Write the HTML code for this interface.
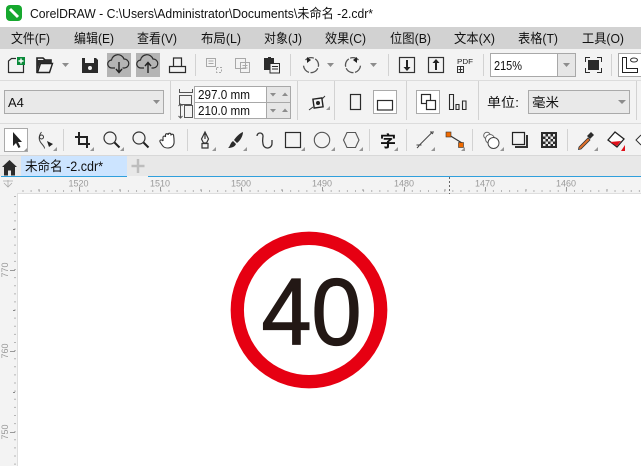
<!DOCTYPE html>
<html><head><meta charset="utf-8">
<style>
html,body{margin:0;padding:0;background:#fff;width:641px;height:466px;overflow:hidden}
svg{display:block;position:absolute;left:0;top:0}
text{font-family:"Liberation Sans","Noto Sans CJK SC",sans-serif;fill:#111}
.m text{font-size:13px}
.r text{font-size:9px;fill:#9a9a9a}
.sep{stroke:#d2d2d2;stroke-width:1}
.ic{fill:none;stroke:#2b2b2b;stroke-width:1.2}
.g{fill:none;stroke:#a8a8a8;stroke-width:1}
.t{fill:#969696}
</style></head><body>
<svg width="641" height="466" viewBox="0 0 641 466" xmlns="http://www.w3.org/2000/svg">
<!-- backgrounds -->
<rect width="641" height="27" fill="#fff"/>
<rect y="27" width="641" height="22" fill="#d2d2d2"/>
<rect y="49" width="641" height="107" fill="#f3f3f3"/>
<rect y="80" width="641" height="1" fill="#dcdcdc"/>
<rect y="123" width="641" height="1" fill="#dcdcdc"/>
<rect y="155" width="641" height="1" fill="#d8d8d8"/>
<rect y="156" width="641" height="20" fill="#e8e8e8"/>
<rect y="176" width="641" height="18" fill="#f3f3f3"/>
<rect x="0" y="194" width="18" height="272" fill="#f3f3f3"/>
<rect x="1" y="176" width="640" height="1" fill="#2f9fdc"/>
<rect x="127" y="176" width="21" height="1" fill="#f3f3f3"/>
<rect x="18" y="193" width="623" height="1" fill="#dedede"/>
<rect x="17" y="193" width="1" height="273" fill="#dedede"/>

<!-- app icon and title -->
<rect x="6" y="5" width="16" height="16" rx="4" fill="#16a82e"/>
<path d="M10 9l8 8" stroke="#fff" stroke-width="3"/>
<text x="30" y="18" font-size="13" textLength="343" lengthAdjust="spacingAndGlyphs">CorelDRAW - C:\Users\Administrator\Documents\未命名 -2.cdr*</text>

<!-- menu -->
<g class="m">
<text x="11" y="43" textLength="39" lengthAdjust="spacingAndGlyphs">文件(F)</text>
<text x="74" y="43" textLength="40" lengthAdjust="spacingAndGlyphs">编辑(E)</text>
<text x="137" y="43" textLength="40" lengthAdjust="spacingAndGlyphs">查看(V)</text>
<text x="201" y="43" textLength="40" lengthAdjust="spacingAndGlyphs">布局(L)</text>
<text x="264" y="43" textLength="38" lengthAdjust="spacingAndGlyphs">对象(J)</text>
<text x="325" y="43" textLength="41" lengthAdjust="spacingAndGlyphs">效果(C)</text>
<text x="390" y="43" textLength="41" lengthAdjust="spacingAndGlyphs">位图(B)</text>
<text x="454" y="43" textLength="41" lengthAdjust="spacingAndGlyphs">文本(X)</text>
<text x="518" y="43" textLength="40" lengthAdjust="spacingAndGlyphs">表格(T)</text>
<text x="582" y="43" textLength="42" lengthAdjust="spacingAndGlyphs">工具(O)</text>
</g>

<!-- standard toolbar -->
<path class="ic" d="M8.500 73V61l3-2.500H16M8.500 72.500H23.500V65"/>
<rect x="17" y="57" width="8" height="8" fill="#0a8a3a"/><path d="M21 58.500v5M18.500 61h5" stroke="#fff" stroke-width="1.400"/>
<path d="M37 73V58h6l2 2h6v3" fill="none" stroke="#222" stroke-width="1.600"/>
<path d="M37.500 72.500l3-9h12l-3 9z" fill="#f3f3f3" stroke="#222" stroke-width="1.400"/>
<path d="M37 60h14v3H40l-3 8z" fill="#2b2b2b"/>
<path d="M62 63h7l-3.500 4z" fill="#8c8c8c"/>
<path d="M82 58h14l2 2v13H82z" fill="#2b2b2b"/><rect x="85" y="58" width="9" height="5" fill="#f3f3f3"/><circle cx="90" cy="68" r="2" fill="#f3f3f3"/>
<rect x="107" y="53" width="24" height="24" fill="#b4b4b4"/>
<rect x="136" y="53" width="24" height="24" fill="#b4b4b4"/>
<path class="ic" d="M115 68h-3a4 4 0 0 1 -.5-8a6.500 6.500 0 0 1 12.500-1a4.500 4.500 0 0 1 .5 9h-2"/>
<path d="M119 62v10M116 69l3 3.500 3-3.500" fill="none" stroke="#222" stroke-width="1.400"/>
<path class="ic" d="M144 68h-3a4 4 0 0 1 -.5-8a6.500 6.500 0 0 1 12.500-1a4.500 4.500 0 0 1 .5 9h-2"/>
<path d="M148 63v10M145 66l3-3.500 3 3.500" fill="none" stroke="#222" stroke-width="1.400"/>
<path class="ic" d="M173.500 66V58h8v8M169.500 66.500h16v6h-16z"/>
<line class="sep" x1="195.500" y1="54" x2="195.500" y2="76"/>
<path class="g" d="M206.500 58.500h9v8h-9zM208.500 61h5M208.500 63.500h5"/>
<path class="g" stroke-dasharray="2 1.500" d="M216.500 67.500h5v5h-5z"/>
<path class="g" d="M235.500 58.500h10v10h-10zM240.500 62.500h9v10h-9zM242.500 65.500h5M242.500 68h5"/>
<path d="M264 58h4v-1h3v1h3v12h-10z" fill="#2b2b2b"/><rect x="270" y="63.500" width="9.500" height="9.500" fill="#f3f3f3" stroke="#2b2b2b"/><path d="M272 66.500h6M272 69h6" stroke="#2b2b2b"/>
<line class="sep" x1="290.500" y1="54" x2="290.500" y2="76"/>
<path d="M305.500 60a7.500 7.500 0 1 1 -2 5" fill="none" stroke="#555" stroke-width="1.300" stroke-dasharray="9 1.500"/>
<path d="M307 57v6l4-3z" fill="#222"/>
<path d="M327 63h7l-3.500 4z" fill="#8c8c8c"/>
<path d="M358.500 60a7.500 7.500 0 1 0 2 5" fill="none" stroke="#555" stroke-width="1.300" stroke-dasharray="9 1.500"/>
<path d="M357 57v6l-4-3z" fill="#222"/>
<path d="M370 63h7l-3.500 4z" fill="#8c8c8c"/>
<line class="sep" x1="388.500" y1="54" x2="388.500" y2="76"/>
<rect x="399.500" y="57.500" width="15" height="15" fill="none" stroke="#333" stroke-width="1.200"/>
<path d="M406 60h2v7h2.500L407 71l-3.500-4H406z" fill="#222"/>
<rect x="428.500" y="57.500" width="15" height="15" fill="none" stroke="#333" stroke-width="1.200"/>
<path d="M435 70h2v-7h2.500L436 59l-3.500 4H435z" fill="#222"/>
<text x="457" y="64" font-size="7.500" textLength="16" lengthAdjust="spacingAndGlyphs" style="fill:#222">PDF</text>
<path d="M457.500 66.500h6v6h-6zM460.500 66.500v6M458.500 69.500h4" fill="none" stroke="#333"/>
<line class="sep" x1="483.500" y1="54" x2="483.500" y2="76"/>
<rect x="490.500" y="53.500" width="85" height="23" fill="#fff" stroke="#a8a8a8"/>
<rect x="558" y="54" width="17" height="22" fill="#e6e6e6"/><line x1="557.500" y1="54" x2="557.500" y2="76" stroke="#a8a8a8"/>
<path d="M563 63h7l-3.500 4z" fill="#8c8c8c"/>
<text x="494" y="70" font-size="13" textLength="28" lengthAdjust="spacingAndGlyphs">215%</text>
<rect x="588" y="60" width="11" height="10" fill="#2b2b2b"/>
<path d="M585.500 62v-4.500h4.500M597 57.500h4.500V62M601.500 68v4.500H597M590 72.500h-4.500V68" fill="none" stroke="#2b2b2b"/>
<line class="sep" x1="611.500" y1="54" x2="611.500" y2="76"/>
<rect x="618.500" y="53.500" width="24" height="23" fill="#fff" stroke="#a8a8a8"/>
<path d="M622.500 57.500v15h15v-4h-11v-11z" fill="none" stroke="#222"/><ellipse cx="634" cy="60" rx="3.500" ry="2" fill="none" stroke="#333"/>

<!-- property bar -->
<rect x="4.500" y="90.500" width="159" height="23" fill="#e9e9e9" stroke="#aaa"/>
<text x="8" y="107" font-size="13">A4</text>
<path d="M153 100h7l-3.500 4z" fill="#8c8c8c"/>
<line class="sep" x1="170.500" y1="81" x2="170.500" y2="120"/>
<path d="M179.500 92.500h13M179.500 89v4M192.500 89v4" fill="none" stroke="#555"/><rect x="179.500" y="95.500" width="12" height="9" fill="none" stroke="#555"/>
<path d="M180.500 104.500v13M178.500 106l2-2 2 2M178.500 116l2 2 2-2" fill="none" stroke="#555"/><rect x="184.500" y="105.500" width="8" height="12" fill="none" stroke="#555"/>
<rect x="194.500" y="86.500" width="96" height="16" fill="#fff" stroke="#a8a8a8"/>
<rect x="194.500" y="102.500" width="96" height="16" fill="#fff" stroke="#a8a8a8"/>
<rect x="266.500" y="86.500" width="24" height="32" fill="#e6e6e6" stroke="#a8a8a8"/>
<line x1="266.500" y1="102.500" x2="290.500" y2="102.500" stroke="#a8a8a8"/>
<path d="M270 93h6l-3 3.500zM282 96h6l-3-3.500zM270 109h6l-3 3.500zM282 112h6l-3-3.500z" fill="#8c8c8c"/>
<text x="198" y="99" font-size="13" textLength="52" lengthAdjust="spacingAndGlyphs">297.0 mm</text>
<text x="198" y="115" font-size="13" textLength="52" lengthAdjust="spacingAndGlyphs">210.0 mm</text>
<line class="sep" x1="297.500" y1="81" x2="297.500" y2="120"/>
<path d="M313.500 98.500h9v9h-9z" fill="none" stroke="#222" stroke-width="1.400" transform="rotate(-8 318 103)"/>
<circle cx="318" cy="103" r="2" fill="#222"/><path d="M309 110l4-3M322 99l3-3" stroke="#333"/>
<path class="t" d="M326 110h4v-4z"/>
<line class="sep" x1="334.500" y1="81" x2="334.500" y2="120"/>
<rect x="350.500" y="94.500" width="10" height="15" fill="none" stroke="#2b2b2b" stroke-width="1.200"/>
<rect x="373.500" y="90.500" width="23" height="23" fill="#fff" stroke="#aaa"/>
<rect x="377.500" y="100.500" width="15" height="9.500" fill="none" stroke="#2b2b2b" stroke-width="1.200"/>
<line class="sep" x1="406.500" y1="81" x2="406.500" y2="120"/>
<rect x="416.500" y="90.500" width="23" height="23" fill="#fff" stroke="#aaa"/>
<rect x="421.500" y="94.500" width="9" height="9" fill="#fff" stroke="#2b2b2b" stroke-width="1.200"/>
<rect x="426.500" y="100.500" width="9" height="9" fill="#fff" stroke="#2b2b2b" stroke-width="1.200"/>
<path d="M449.500 94.500h4v15h-4zM456 104.500h3v5h-3zM462.500 101h3.500v8.500h-3.500z" fill="none" stroke="#2b2b2b" stroke-width="1.100"/>
<line class="sep" x1="478.500" y1="81" x2="478.500" y2="120"/>
<text x="487" y="107" font-size="13" textLength="32" lengthAdjust="spacingAndGlyphs">单位:</text>
<rect x="528.500" y="90.500" width="101" height="23" fill="#e9e9e9" stroke="#aaa"/>
<text x="532" y="107" font-size="13" textLength="27" lengthAdjust="spacingAndGlyphs">毫米</text>
<path d="M618 100h8l-4 4z" fill="#8c8c8c"/>
<line class="sep" x1="636.500" y1="81" x2="636.500" y2="120"/>

<!-- toolbox -->
<rect x="4.500" y="128.500" width="23" height="23" fill="#fff" stroke="#aaa"/>
<path d="M13 132v14l3-3 2.500 5 2-1-2.500-5h4z" fill="#222"/>
<path class="t" d="M24 151h3v-3zM53 151h4v-4zM90 151h4v-4zM120 151h4v-4zM212 151h4v-4zM243 151h4v-4zM301 151h4v-4zM331 151h4v-4zM359 151h4v-4zM394 151h4v-4zM431 151h4v-4zM461 151h4v-4zM500 151h4v-4zM594 151h4v-4z"/>
<path d="M41.500 132c-3 4 -3 8 0 11.500s3 4 3 5" fill="none" stroke="#444"/><circle cx="41.500" cy="137" r="2" fill="#f3f3f3" stroke="#333"/>
<path d="M47 141l6 3-4 3z" fill="#222"/>
<line class="sep" x1="63.500" y1="129" x2="63.500" y2="151"/>
<path d="M79 132v12h11M75 137h12v11" fill="none" stroke="#222" stroke-width="2"/>
<circle cx="110" cy="138" r="6" fill="none" stroke="#333" stroke-width="1.200"/><path d="M114.500 142.500l5 5" stroke="#222" stroke-width="2"/>
<circle cx="139" cy="138" r="6" fill="none" stroke="#333" stroke-width="1.200"/><path d="M143.500 142.500l5 5" stroke="#222" stroke-width="2"/>
<path d="M163 141v-4a1.300 1.300 0 0 1 2.500 0V135a1.300 1.300 0 0 1 2.700 0v-.5a1.300 1.300 0 0 1 2.700 0v1a1.300 1.300 0 0 1 2.700 0c.5 3 .5 5 .5 6.500 0 4-3 6-6 6-4 0-5-1-8-6-1-2 1.500-3 3-1" fill="#fff" stroke="#333" stroke-width="1.100"/>
<line class="sep" x1="187.500" y1="129" x2="187.500" y2="151"/>
<path d="M205 132l-3.500 7 2 4h3l2-4zM205 132v7M202 143.500h6v4.500h-6z" fill="none" stroke="#333" stroke-width="1.200"/>
<path d="M243 132c-3 1 -7 5 -9 8l3 3c3-2 6-7 6-11zM233 141l3 3c-1 3 -5 4 -8 4 2-1 2-5 5-7z" fill="#2b2b2b"/>
<path d="M257 136a3 3 0 0 1 6 0c0 2-1 4 0 8a4.500 4.500 0 0 0 9 -1v-3" fill="none" stroke="#333" stroke-width="1.300"/>
<rect x="285.500" y="132.500" width="15" height="15" fill="none" stroke="#2b2b2b" stroke-width="1.200"/>
<circle cx="322" cy="140" r="7.700" fill="none" stroke="#555" stroke-width="1.100"/>
<path d="M347 132.500h8.500l3.500 7.500-3.500 7.500H347l-3.500-7.500z" fill="none" stroke="#555" stroke-width="1.100"/>
<line class="sep" x1="369.500" y1="129" x2="369.500" y2="151"/>
<text x="380" y="147" font-size="16" font-weight="bold" textLength="16">字</text>
<line class="sep" x1="406.500" y1="129" x2="406.500" y2="151"/>
<path d="M418.500 146l13-13" stroke="#444"/><path d="M416.500 145h5M430 132h4" stroke="#444"/><path d="M417 148l2-2M431 132l2 2" stroke="#444"/>
<path d="M449 135l13 8" stroke="#333" stroke-width="1.200"/><rect x="446" y="132" width="5" height="5" fill="#f06a00" stroke="#333" stroke-width=".6"/><rect x="458.500" y="142.500" width="5" height="5" fill="#f06a00" stroke="#333" stroke-width=".6"/>
<line class="sep" x1="472.500" y1="129" x2="472.500" y2="151"/>
<circle cx="487" cy="135.500" r="3.300" fill="#fff" stroke="#666"/><circle cx="490" cy="139" r="4.500" fill="#fff" stroke="#666"/><circle cx="493.500" cy="143" r="5.500" fill="#fff" stroke="#444"/>
<path d="M512.500 132.500h12v12h-12z" fill="none" stroke="#222" stroke-width="1.200"/><path d="M527 135v12h-12" fill="none" stroke="#333" stroke-width="2"/>
<rect x="541" y="132" width="16" height="16" fill="#2b2b2b"/>
<path d="M543 134h2.500v2.500H543zM548 134h2.500v2.500H548zM553 134h2v2.500h-2zM545.500 136.500h2.500V139h-2.500zM550.500 136.500H553V139h-2.500zM543 139h2.500v2.500H543zM548 139h2.500v2.500H548zM553 139h2v2.500h-2zM545.500 141.500h2.500V144h-2.500zM550.500 141.500H553V144h-2.500zM543 144h2.500v2h-2.500zM548 144h2.500v2H548zM553 144h2v2h-2z" fill="#e8e8e8"/>
<line class="sep" x1="567.500" y1="129" x2="567.500" y2="151"/>
<path d="M579 147l9-9 2 2-9 9-2.500.5z" fill="#e0702a" stroke="#333" stroke-width=".8"/>
<path d="M587 136l4-4 3 3-4 4z" fill="#2b2b2b"/>
<path d="M615 132l9 7-7 8-9-7z" fill="#fff" stroke="#222" stroke-width="1.300"/>
<path d="M610 142l11-1-4 5z" fill="#e0101a"/><path d="M621 151h4v-6z" fill="#e0101a"/>
<path d="M641 135l-5 5 5 5" fill="#fff" stroke="#333"/>

<!-- tabs -->
<path d="M9.500 160l7.500 7h-2v8.500h-4v-5h-3v5h-4V167h-2z" fill="#2b2b2b"/>
<rect x="21" y="156" width="106" height="20" fill="#cce4ff"/>
<text x="25" y="171" font-size="13.500" textLength="78" lengthAdjust="spacingAndGlyphs">未命名 -2.cdr*</text>
<path d="M138 159v14M131.500 166h13" stroke="#bdbdbd" stroke-width="2.500"/>

<!-- rulers -->
<g class="r">
<text x="78.500" y="186.500" text-anchor="middle">1520</text>
<text x="160" y="186.500" text-anchor="middle">1510</text>
<text x="241" y="186.500" text-anchor="middle">1500</text>
<text x="322" y="186.500" text-anchor="middle">1490</text>
<text x="404" y="186.500" text-anchor="middle">1480</text>
<text x="485" y="186.500" text-anchor="middle">1470</text>
<text x="566" y="186.500" text-anchor="middle">1460</text>
<text transform="translate(8,270) rotate(-90)" text-anchor="middle">770</text>
<text transform="translate(8,351) rotate(-90)" text-anchor="middle">760</text>
<text transform="translate(8,432) rotate(-90)" text-anchor="middle">750</text>
</g>
<path d="M4 183l4 4 4-4M8 180v7M3 181h10" fill="none" stroke="#aaa" stroke-width=".8"/>
<line x1="22.500" y1="191" x2="641" y2="191" stroke="#777" stroke-dasharray="1 7.110"/>
<path d="M79.500 187v4M160.500 187v4M241.500 187v4M322.500 187v4M404.500 187v4M485.500 187v4M566.500 187v4" stroke="#999"/>
<path d="M39 189v2M120 189v2M201 189v2M282 189v2M363 189v2M445 189v2M526 189v2M607 189v2" stroke="#999"/>
<line x1="449.500" y1="177" x2="449.500" y2="194" stroke="#666" stroke-dasharray="2 2"/>
<line x1="15" y1="196" x2="15" y2="466" stroke="#777" stroke-dasharray="1 7.110"/>
<path d="M10 270.500h5M10 351.500h5M10 432.500h5" stroke="#999"/>
<path d="M13 229.500h2M13 310.500h2M13 392.500h2" stroke="#888"/>

<!-- sign -->
<circle cx="309" cy="310" r="71.700" fill="#fff" stroke="#e60012" stroke-width="13.300"/>
<text x="311.500" y="344.500" font-size="95" text-anchor="middle" style="fill:#231815;stroke:#231815;stroke-width:1.300px" textLength="100" lengthAdjust="spacingAndGlyphs">40</text>
</svg>
</body></html>
